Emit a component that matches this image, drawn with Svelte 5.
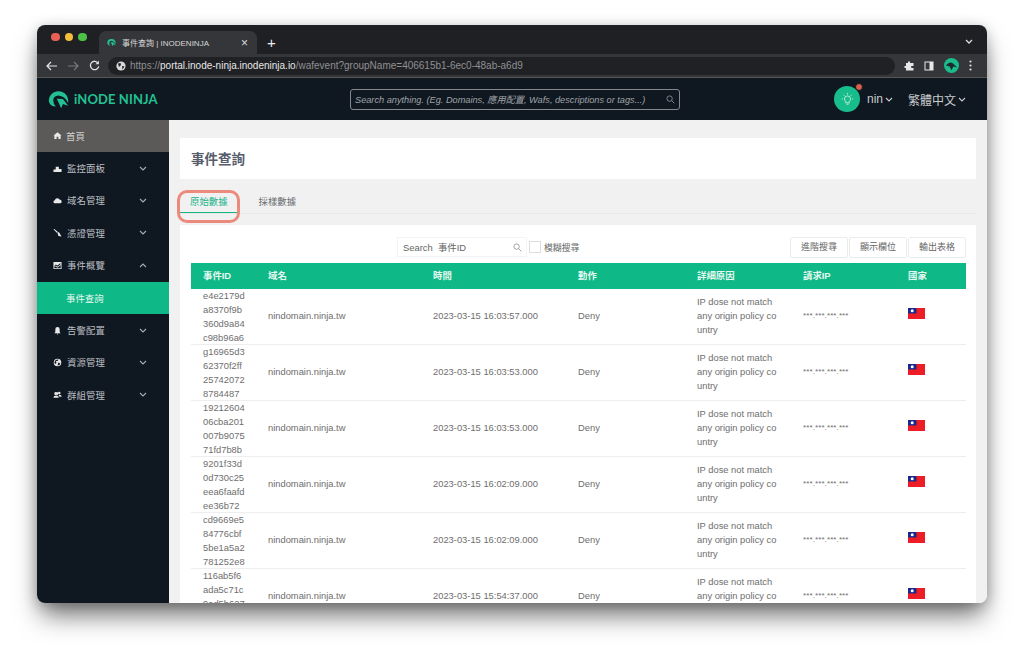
<script>
	const menu = [
		{ label: '監控面板', icon: 'chart' },
		{ label: '域名管理', icon: 'cloud' },
		{ label: '憑證管理', icon: 'brush' },
		{ label: '事件概覽', icon: 'report', open: true },
		{ label: '告警配置', icon: 'bell' },
		{ label: '資源管理', icon: 'globe' },
		{ label: '群組管理', icon: 'users' }
	];

	const columns = ['事件ID', '域名', '時間', '動作', '詳細原因', '請求IP', '國家'];

	const rows = [
		{ id: ['e4e2179d', 'a8370f9b', '360d9a84', 'c98b96a6'], time: '2023-03-15 16:03:57.000' },
		{ id: ['g16965d3', '62370f2ff', '25742072', '8784487'], time: '2023-03-15 16:03:53.000' },
		{ id: ['19212604', '06cba201', '007b9075', '71fd7b8b'], time: '2023-03-15 16:03:53.000' },
		{ id: ['9201f33d', '0d730c25', 'eea6faafd', 'ee36b72'], time: '2023-03-15 16:02:09.000' },
		{ id: ['cd9669e5', '84776cbf', '5be1a5a2', '781252e8'], time: '2023-03-15 16:02:09.000' },
		{ id: ['116ab5f6', 'ada5c71c', '9ad5b627', '1c0e42aa'], time: '2023-03-15 15:54:37.000' }
	];
</script>

{#snippet logo(size)}
	<svg width={size} height={size} viewBox="0 0 24 24" class="logo-mark">
		<path d="M1 14 A11 10.5 0 0 1 23 12 V16 Q19 8 12 7.5 Q6 8 6 13 Q6 17 9 20 L5 19.5 Q1 17 1 14 Z" fill="#22c193" />
		<path d="M10 11 L17 11.5 L23 19 L17 17 L15 22 L12 15 Z" fill="#22c193" />
	</svg>
{/snippet}

{#snippet chevron(up)}
	<svg class="chev" width="8" height="5" viewBox="0 0 8 5">
		<path d={up ? 'M1 4 L4 1 L7 4' : 'M1 1 L4 4 L7 1'} fill="none" stroke="currentColor" stroke-width="1.1" />
	</svg>
{/snippet}

{#snippet menuIcon(name)}
	<svg class="micon" width="9" height="9" viewBox="0 0 10 10" fill="#e8e8e8">
		{#if name === 'home'}
			<path d="M5 1.5 L9.5 5 H8.5 V9 H6 V6.5 H4 V9 H1.5 V5 H.5 Z" />
		{:else if name === 'chart'}
			<path d="M.5 9 V6 H3 V3 H6.5 V5.5 H9.5 V9 Z" />
		{:else if name === 'cloud'}
			<path d="M1.5 8 A1.8 1.8 0 0 1 2 4.6 A3 3 0 0 1 7.6 4.2 A2 2 0 0 1 8.5 8 Z" />
		{:else if name === 'brush'}
			<path d="M.5 1.5 L1.5 1 L5.5 4.5 L4.5 5.5 Z M5 5.5 L6.5 4.5 L9.5 9.5 L6 9 Z" />
		{:else if name === 'report'}
			<path fill-rule="evenodd" d="M.5 1 H9.5 V9 H.5 Z M1.5 5.5 L3 3.8 L5 5 L8 2.5 L8.6 3.2 L5 6.4 L3 5 L1.5 6.5 V8 H8.5 V4.4 L5 7.6 L3 6.2 Z" />
		{:else if name === 'bell'}
			<path d="M5 1 A2.4 2.4 0 0 1 7.4 3.5 V6.5 L8.4 8 H1.6 L2.6 6.5 V3.5 A2.4 2.4 0 0 1 5 1 Z M4 8.6 H6 L5 9.6 Z" />
		{:else if name === 'globe'}
			<path fill-rule="evenodd" d="M5 .8 A4.2 4.2 0 1 1 5 9.2 A4.2 4.2 0 1 1 5 .8 Z M5 1.7 A3.3 3.3 0 0 0 2.2 6.8 L4 5.5 L3 3.5 L5.5 3 L6 1.8 Z M6 5 L5 8.3 A3.3 3.3 0 0 0 8.2 6 Z" />
		{:else}
			<path d="M3.6 2.4 A1.6 1.6 0 1 1 3.6 5.4 A1.6 1.6 0 1 1 3.6 2.4 Z M.6 8.6 Q.6 6 3.6 6 Q6.4 6 6.4 8.6 Z M7 2 A1.4 1.4 0 1 1 7 4.8 A1.4 1.4 0 1 1 7 2 Z M7.2 5.4 Q9.6 5.6 9.6 7.6 H7.2 Q7 6.4 6.2 5.8 Z" />
		{/if}
	</svg>
{/snippet}

{#snippet searchIcon(color)}
	<svg width="9" height="9" viewBox="0 0 10 10">
		<circle cx="4" cy="4" r="3" fill="none" stroke={color} stroke-width="1" />
		<path d="M6.3 6.3 L9.2 9.2" stroke={color} stroke-width="1" />
	</svg>
{/snippet}

<div class="window">
	<div class="tabstrip">
		<div class="lights">
			<span class="light red"></span>
			<span class="light yellow"></span>
			<span class="light green"></span>
		</div>
		<div class="tab">
			{@render logo(9)}
			<span class="tab-title">事件查詢 | INODENINJA</span>
			<span class="tab-x">×</span>
		</div>
		<span class="tab-plus">+</span>
		<svg class="strip-chev" width="8" height="5" viewBox="0 0 8 5">
			<path d="M1 1 L4 4 L7 1" fill="none" stroke="#ddd" stroke-width="1.3" />
		</svg>
	</div>

	<div class="toolbar">
		<svg width="12" height="10" viewBox="0 0 12 10" class="nav back">
			<path d="M11 5 H1.5 M5 1 L1 5 L5 9" fill="none" stroke="#e4e4e4" stroke-width="1.2" />
		</svg>
		<svg width="12" height="10" viewBox="0 0 12 10" class="nav forward">
			<path d="M1 5 H10.5 M7 1 L11 5 L7 9" fill="none" stroke="#77787a" stroke-width="1.2" />
		</svg>
		<svg width="11" height="11" viewBox="0 0 12 12" class="nav reload">
			<path d="M10 3.5 A4.6 4.6 0 1 0 10.6 7" fill="none" stroke="#e4e4e4" stroke-width="1.4" />
			<path d="M10.8 .8 V4.6 H7 Z" fill="#e4e4e4" />
		</svg>
		<div class="urlbar">
			<svg width="10" height="10" viewBox="0 0 10 10" class="url-globe">
				<circle cx="5" cy="5" r="4.6" fill="#d8d8d8" />
				<path d="M2 2.5 L4.5 2 L5 4 L3 6 Z M6 5 L8.5 5.5 L6.5 8.5 Z" fill="#202124" />
			</svg>
			<span class="url"><span class="dim">https://</span>portal.inode-ninja.inodeninja.io<span class="dim">/wafevent?groupName=406615b1-6ec0-48ab-a6d9</span></span>
		</div>
		<div class="tool-icons">
			<svg width="10" height="10" viewBox="0 0 10 10">
				<path d="M4 0.5 H6 V2 H9.5 V5 H8 A1 1 0 0 0 8 7 H9.5 V9.5 H2 V7 H.5 V5 H2 V2 H4 Z" fill="#e8e8e8" />
			</svg>
			<svg width="10" height="10" viewBox="0 0 10 10">
				<path fill-rule="evenodd" d="M.5 .5 H9.5 V9.5 H.5 Z M1.5 1.5 V8.5 H5.5 V1.5 Z" fill="#e8e8e8" />
			</svg>
			<span class="avatar">
				<svg width="15" height="15" viewBox="0 0 16 16">
					<circle cx="8" cy="8" r="8" fill="#1abc8c" />
					<path d="M2 8 Q6 3 10 6 L14 10 L10 9 L8 13 L6 9 Z" fill="#1e2a30" />
				</svg>
			</span>
			<svg width="3" height="11" viewBox="0 0 3 11">
				<circle cx="1.5" cy="1.5" r="1.1" fill="#e0e0e0" />
				<circle cx="1.5" cy="5.5" r="1.1" fill="#e0e0e0" />
				<circle cx="1.5" cy="9.5" r="1.1" fill="#e0e0e0" />
			</svg>
		</div>
	</div>

	<header class="app-header">
		<div class="brand">
			{@render logo(21)}
			<span class="brand-name">iNODE NINJA</span>
		</div>
		<div class="global-search">
			<span>Search anything. (Eg. Domains, 應用配置, Wafs, descriptions or tags...)</span>
			{@render searchIcon('#8a8f94')}
		</div>
		<div class="header-right">
			<span class="bulb">
				<svg width="15" height="15" viewBox="0 0 16 16" fill="none" stroke="#e8f8f2" stroke-width=".8">
					<path d="M6 10 Q4.8 8.8 4.8 7.4 A3.2 3.2 0 0 1 11.2 7.4 Q11.2 8.8 10 10 V11.5 H6 Z" />
					<path d="M6.8 13 H9.2 M8 1 V2.6 M2 7.4 H3.2 M12.8 7.4 H14 M3.6 3 L4.6 4 M12.4 3 L11.4 4" />
				</svg>
				<span class="dot"></span>
			</span>
			<span class="user">nin{@render chevron(false)}</span>
			<span class="lang">繁體中文{@render chevron(false)}</span>
		</div>
	</header>

	<div class="body">
		<nav class="sidebar">
			<div class="item home">
				{@render menuIcon('home')}
				<span>首頁</span>
			</div>
			{#each menu as entry}
				<div class="item">
					{@render menuIcon(entry.icon)}
					<span class="item-label">{entry.label}</span>
					{@render chevron(entry.open)}
				</div>
				{#if entry.open}
					<div class="item active">事件查詢</div>
				{/if}
			{/each}
		</nav>

		<main class="content">
			<div class="title-card">事件查詢</div>

			<div class="tabs">
				<span class="tabs-item current">原始數據</span>
				<span class="tabs-item">採樣數據</span>
				<span class="callout"></span>
			</div>

			<section class="panel">
				<div class="filters">
					<div class="filter-center">
						<div class="filter-input">
							<span>Search&nbsp; 事件ID</span>
							{@render searchIcon('#999')}
						</div>
						<span class="check"></span>
						<span class="check-label">模糊搜尋</span>
					</div>
					<div class="actions">
						<span class="btn">進階搜尋</span>
						<span class="btn">顯示欄位</span>
						<span class="btn">輸出表格</span>
					</div>
				</div>

				<div class="grid head">
					{#each columns as col}
						<div class="th">{col}</div>
					{/each}
				</div>
				{#each rows as row}
					<div class="grid row">
						<div class="td id-cell">
							{#each row.id as part}
								<div>{part}</div>
							{/each}
						</div>
						<div class="td">nindomain.ninja.tw</div>
						<div class="td">{row.time}</div>
						<div class="td">Deny</div>
						<div class="td">IP dose not match<br />any origin policy co<br />untry</div>
						<div class="td ip">***.***.***.***</div>
						<div class="td">
							<svg class="flag" width="17" height="11" viewBox="0 0 17 11">
								<rect width="17" height="11" fill="#ee1c25" />
								<rect width="8.5" height="5.5" fill="#1a2a8c" />
								<circle cx="4.2" cy="2.75" r="1.5" fill="#fff" />
							</svg>
						</div>
					</div>
				{/each}
			</section>
		</main>
	</div>
</div>

<style>
	:global(body) {
		background: #fff;
		overflow: hidden;
		height: 652px;
	}

	.window {
		position: relative;
		width: 950px;
		height: 578px;
		margin: 25px 0 0 37px;
		border-radius: 8px;
		overflow: hidden;
		display: flex;
		flex-direction: column;
		font-family: 'Liberation Sans', 'Noto Sans CJK TC', sans-serif;
		box-shadow: 0 16px 26px -4px rgba(0, 0, 0, 0.55), 0 2px 14px rgba(0, 0, 0, 0.22);
	}

	.tabstrip {
		height: 29px;
		flex: none;
		background: #1f2023;
		display: flex;
		align-items: flex-end;
		position: relative;
	}

	.lights {
		display: flex;
		gap: 5px;
		padding: 0 0 13px 14px;
		width: 48px;
		box-sizing: content-box;
	}

	.light {
		width: 8.5px;
		height: 8.5px;
		border-radius: 50%;
	}

	.red { background: #ec5f57; }
	.yellow { background: #f5bd3a; }
	.green { background: #4cc347; }

	.tab {
		width: 158px;
		height: 23px;
		background: #35363a;
		border-radius: 7px 7px 0 0;
		display: flex;
		align-items: center;
		padding: 0 9px 0 8px;
		box-sizing: border-box;
		gap: 6px;
		color: #d6d6d6;
		font-size: 8px;
	}

	.tab-title {
		flex: 1;
	}

	.tab-x {
		font-size: 12px;
		color: #ddd;
	}

	.tab-plus {
		color: #eee;
		font-size: 15px;
		line-height: 23px;
		margin-left: 10px;
	}

	.strip-chev {
		position: absolute;
		right: 14px;
		top: 14px;
	}

	.toolbar {
		height: 24px;
		flex: none;
		background: #35363a;
		display: flex;
		align-items: center;
		padding-left: 9px;
		border-bottom: 1px solid #55565a;
		box-sizing: border-box;
	}

	.back,
	.forward {
		margin-right: 9px;
	}

	.reload {
		margin: 0 8px 0 1px;
	}

	.urlbar {
		width: 787px;
		height: 18px;
		background: #202124;
		border-radius: 9px;
		display: flex;
		align-items: center;
		padding-left: 8px;
		box-sizing: border-box;
	}

	.url-globe {
		margin-right: 4px;
	}

	.url {
		color: #e8e8e8;
		font-size: 10px;
	}

	.dim {
		color: #8f9093;
	}

	.tool-icons {
		display: flex;
		align-items: center;
		gap: 10px;
		margin-left: 9px;
	}

	.avatar {
		display: flex;
	}

	.app-header {
		height: 42px;
		flex: none;
		background: #0f1720;
		display: flex;
		align-items: center;
		position: relative;
	}

	.brand {
		display: flex;
		align-items: center;
		gap: 5px;
		padding-left: 11px;
		width: 313px;
		box-sizing: border-box;
	}

	.brand-name {
		font-family: Lato, sans-serif;
		font-weight: 700;
		font-size: 13px;
		color: #22c193;
		letter-spacing: 0.1px;
	}

	.global-search {
		width: 330px;
		height: 21px;
		border: 1px solid #85898d;
		border-radius: 3px;
		box-sizing: border-box;
		display: flex;
		align-items: center;
		justify-content: space-between;
		padding: 0 4px;
		color: #a0a4a8;
		font-size: 9.2px;
		font-style: italic;
	}

	.header-right {
		display: flex;
		align-items: center;
		margin-left: 154px;
	}

	.bulb {
		position: relative;
		width: 26px;
		height: 26px;
		border-radius: 50%;
		background: #17bd8a;
		display: flex;
		align-items: center;
		justify-content: center;
		margin-right: 7px;
	}

	.dot {
		position: absolute;
		right: -3px;
		top: -3px;
		width: 6px;
		height: 6px;
		border-radius: 50%;
		background: #d9604c;
		border: 1px solid #0f1720;
	}

	.user,
	.lang {
		display: flex;
		align-items: center;
		color: #c8cacc;
		font-size: 12px;
		gap: 2px;
	}

	.lang {
		margin-left: 15px;
	}

	.body {
		flex: 1;
		display: flex;
		min-height: 0;
	}

	.sidebar {
		width: 132px;
		flex: none;
		background: #0f1720;
	}

	.item {
		height: 32.4px;
		display: flex;
		align-items: center;
		padding-left: 16px;
		padding-bottom: 1px;
		box-sizing: border-box;
		color: #bcbfc3;
		font-size: 9.4px;
		gap: 5px;
	}

	.item-label {
		width: 67px;
		letter-spacing: 0.1px;
	}

	.item .chev {
		color: #a8acb0;
	}

	.home {
		background: #5c5a58;
		gap: 4px;
		color: #d0d0d0;
	}

	.active {
		background: #0fb987;
		color: #e8f8f2;
		padding-left: 29px;
	}

	.content {
		flex: 1;
		min-width: 0;
		background: #f1f1f1;
		padding: 18px 11px 0;
		overflow: hidden;
		box-sizing: border-box;
	}

	.title-card {
		height: 41px;
		background: #fff;
		display: flex;
		align-items: center;
		padding: 0 0 2px 11px;
		box-sizing: border-box;
		color: #565c6c;
		font-size: 13.5px;
		font-weight: 700;
	}

	.tabs {
		position: relative;
		display: flex;
		height: 35px;
		border-bottom: 1px solid #e8e8e8;
		box-sizing: border-box;
		align-items: flex-end;
	}

	.tabs-item {
		font-size: 9.4px;
		color: #6a6e72;
		height: 25px;
		padding: 0 10px;
		line-height: 27px;
		margin-right: 11px;
		box-sizing: border-box;
	}

	.current {
		color: #23b58c;
		border-bottom: 1.5px solid #17b585;
	}

	.callout {
		position: absolute;
		left: -3px;
		top: 11px;
		width: 63px;
		height: 33px;
		border: 3px solid #ec8a7e;
		border-radius: 10px;
		box-sizing: border-box;
	}

	.panel {
		margin-top: 11px;
		background: #fff;
		padding: 12px 10px 0 11px;
	}

	.filters {
		height: 26px;
		position: relative;
		display: flex;
		justify-content: flex-end;
		align-items: flex-start;
	}

	.filter-center {
		position: absolute;
		left: 206px;
		top: 0;
		display: flex;
		align-items: center;
		height: 20px;
	}

	.filter-input {
		width: 130px;
		height: 20px;
		box-sizing: border-box;
		display: flex;
		justify-content: space-between;
		align-items: center;
		padding: 0 4px 0 5px;
		font-size: 9.4px;
		color: #666;
		border: 1px solid #f4f4f4;
	}

	.check {
		width: 10px;
		height: 10px;
		border: 1px solid #ddd;
		margin: 0 3px 0 2px;
	}

	.check-label {
		font-size: 8.9px;
		color: #666;
	}

	.actions {
		display: flex;
		gap: 1px;
	}

	.btn {
		height: 21px;
		width: 58px;
		box-sizing: border-box;
		border: 1px solid #ececec;
		border-radius: 2px;
		font-size: 9px;
		color: #666;
		display: flex;
		align-items: center;
		justify-content: center;
		padding-bottom: 2px;
	}

	.grid {
		display: grid;
		grid-template-columns: 65px 165px 145px 119px 106px 105px 1fr;
	}

	.head {
		height: 26px;
		background: #0fb987;
		align-items: center;
	}

	.th {
		padding: 0 0 2px 12px;
		color: #e6f7f1;
		font-size: 9.4px;
		font-weight: 700;
	}

	.row {
		height: 56px;
		align-items: center;
		border-bottom: 1px solid #eeeeee;
		box-sizing: border-box;
	}

	.td {
		padding: 0 0 2px 12px;
		color: #6e6e6e;
		font-size: 9.35px;
		line-height: 14px;
		white-space: nowrap;
	}

	.id-cell {
		padding-bottom: 0;
	}

	.ip {
		font-size: 8px;
		letter-spacing: 0.1px;
	}

	.flag {
		display: block;
		margin-top: -6px;
	}
</style>
